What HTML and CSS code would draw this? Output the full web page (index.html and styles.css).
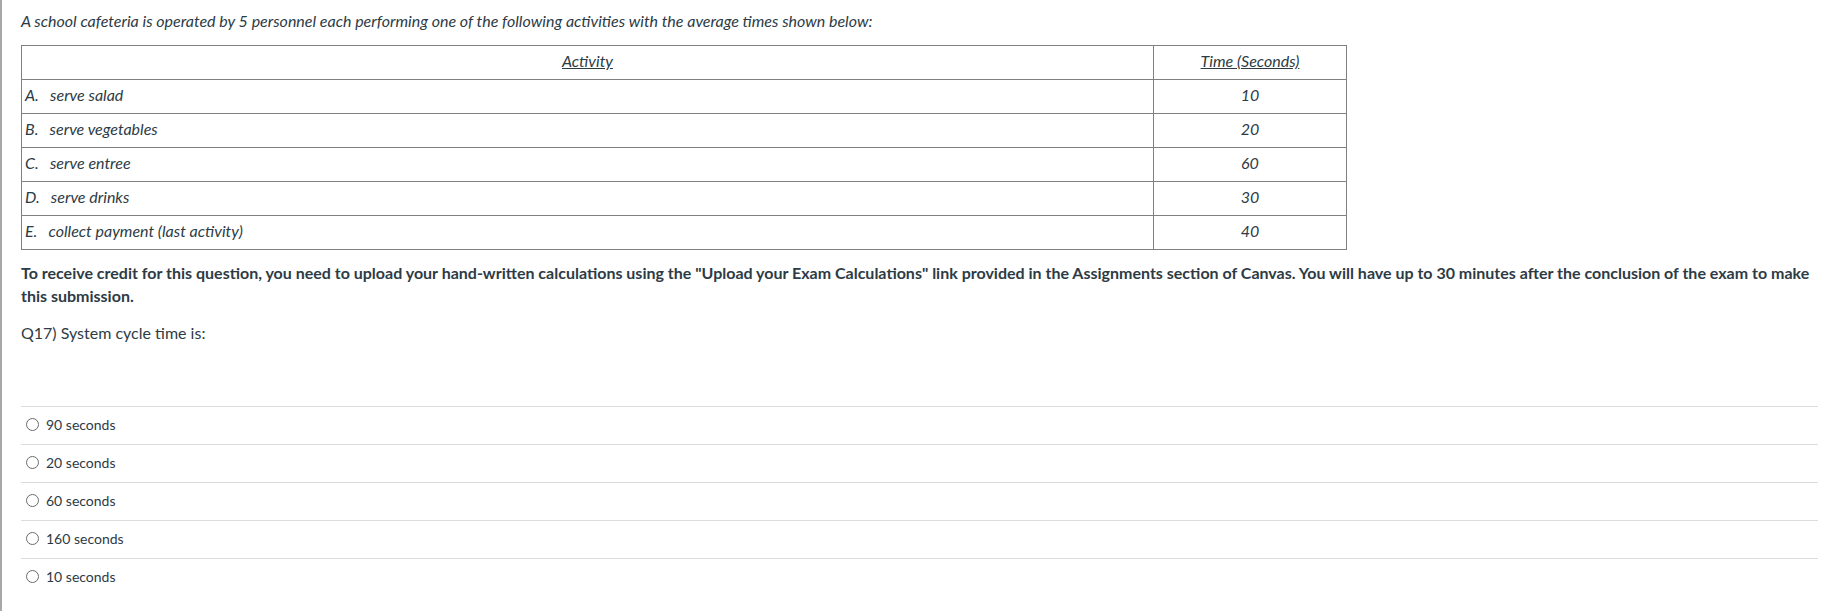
FILE: index.html
```html
<!DOCTYPE html>
<html>
<head>
<meta charset="utf-8">
<link rel="stylesheet" href="styles.css">
</head>
<body>
<div class="question">
  <p class="intro">A school cafeteria is operated by 5 personnel each performing one of the following activities with the average times shown below:</p>
  <table class="activities">
    <thead>
      <tr><th class="col-act"><u>Activity</u></th><th class="col-time"><u>Time (Seconds)</u></th></tr>
    </thead>
    <tbody>
      <tr><td>A.&nbsp;&nbsp; serve salad</td><td class="num">10</td></tr>
      <tr><td>B.&nbsp;&nbsp; serve vegetables</td><td class="num">20</td></tr>
      <tr><td>C.&nbsp;&nbsp; serve entree</td><td class="num">60</td></tr>
      <tr><td>D.&nbsp;&nbsp; serve drinks</td><td class="num">30</td></tr>
      <tr><td>E.&nbsp;&nbsp; collect payment (last activity)</td><td class="num">40</td></tr>
    </tbody>
  </table>
  <p class="note">To receive credit for this question, you need to upload your hand-written calculations using the "Upload your Exam Calculations" link provided in the Assignments section of Canvas. You will have up to 30 minutes after the conclusion of the exam to make this submission.</p>
  <p class="prompt">Q17) System cycle time is:</p>
  <div class="answers">
    <label class="answer"><span class="radio"></span><span>90 seconds</span></label>
    <label class="answer"><span class="radio"></span><span>20 seconds</span></label>
    <label class="answer"><span class="radio"></span><span>60 seconds</span></label>
    <label class="answer"><span class="radio"></span><span>160 seconds</span></label>
    <label class="answer"><span class="radio"></span><span>10 seconds</span></label>
  </div>
</div>
</body>
</html>
```

FILE: styles.css
```css
html, body {
  margin: 0;
  padding: 0;
  background: #fff;
}
body {
  font-family: Lato, "Liberation Sans", sans-serif;
  color: #2d3b45;
  font-size: 16px;
}
.question {
  border-left: 2px solid #a8a8a8;
  padding: 9px 6px 40px 19px;
  min-height: 562px;
}
.intro {
  margin: 0 0 12px 0;
  font-style: italic;
  line-height: 24px;
}
.activities {
  border-collapse: collapse;
  width: 1326px;
  font-style: italic;
}
.activities th, .activities td {
  border: 1px solid #808080;
  height: 34px;
  padding: 0 3px 5px 3px;
  box-sizing: border-box;
  font-weight: normal;
}
.activities th {
  text-align: center;
}
.col-time {
  width: 193px;
}
.activities td.num {
  text-align: center;
}
.note {
  margin: 11px 0 0 0;
  font-weight: bold;
  line-height: 23px;
}
.prompt {
  margin: 14px 0 0 0;
  line-height: 23px;
}
.answers {
  margin-top: 62px;
}
.answer {
  display: flex;
  align-items: center;
  gap: 7px;
  height: 38px;
  box-sizing: border-box;
  border-top: 1px solid #dcdcdc;
  padding: 0 0 3px 5px;
  font-size: 14px;
}
.radio {
  width: 13px;
  height: 13px;
  border: 1px solid #6b6b6b;
  border-radius: 50%;
  box-sizing: border-box;
}
```
